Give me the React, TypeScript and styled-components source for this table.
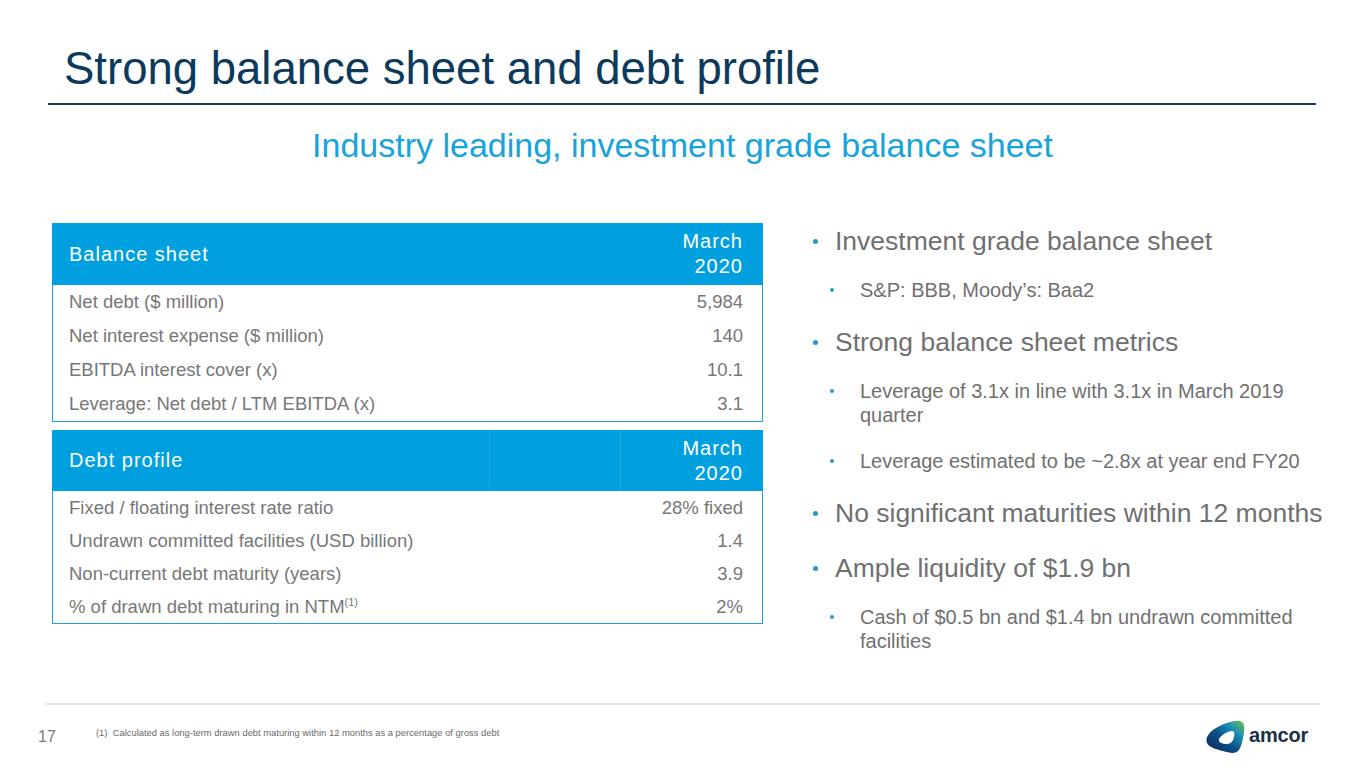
import styled, { createGlobalStyle } from 'styled-components';

const GlobalStyle = createGlobalStyle`
  html, body {
    margin: 0;
    padding: 0;
    background: #ffffff;
  }
  body {
    font-family: "Liberation Sans", Arial, sans-serif;
  }
`;

const Page = styled.div`
  width: 1365px;
  height: 768px;
  display: flex;
  flex-direction: column;
  overflow: hidden;
  background: #ffffff;
`;

const TitleBar = styled.header`
  margin-left: 48px;
  width: 1268px;
  padding: 43px 0 8px 16px;
  box-sizing: border-box;
  border-bottom: 2px solid #1d3d5a;
`;

const Title = styled.h1`
  margin: 0;
  font-size: 45.5px;
  line-height: 52px;
  font-weight: 400;
  color: #0c3a5d;
`;

const Subtitle = styled.h2`
  margin: 20px 0 0;
  text-align: center;
  font-size: 34px;
  line-height: 40px;
  font-weight: 400;
  color: #17a3dc;
`;

const Main = styled.main`
  display: flex;
  margin-top: 58px;
  padding-left: 52px;
`;

const TablesColumn = styled.div`
  display: flex;
  flex-direction: column;
  gap: 8px;
  width: 711px;
  flex: none;
`;

const Table = styled.div`
  border: 1px solid #1ea2dd;
  border-top: none;
`;

const HeaderRow = styled.div<{ $split?: boolean; $height: number }>`
  display: grid;
  grid-template-columns: ${p => (p.$split ? '437px 131px 1fr' : '1fr auto')};
  height: ${p => p.$height}px;
  margin: 0 -1px;
  background: #009fe0;
  color: #ffffff;
  font-size: 20px;
  letter-spacing: 1px;
`;

const HeaderCell = styled.div<{ $right?: boolean; $divider?: boolean }>`
  display: flex;
  align-items: center;
  justify-content: ${p => (p.$right ? 'flex-end' : 'flex-start')};
  text-align: ${p => (p.$right ? 'right' : 'left')};
  padding: ${p => (p.$right ? '0 20px 0 0' : '0 0 0 17px')};
  line-height: 25px;
  border-left: ${p => (p.$divider ? '1px solid rgba(255, 255, 255, 0.13)' : 'none')};
`;

const Row = styled.div<{ $height: number }>`
  display: flex;
  justify-content: space-between;
  align-items: center;
  height: ${p => p.$height}px;
  padding: 0 19px 0 16px;
  font-size: 18.5px;
  color: #777777;
`;

const Sup = styled.sup`
  font-size: 11px;
  line-height: 0;
  vertical-align: 7px;
`;

const BulletList = styled.ul`
  list-style: none;
  margin: 3px 0 0 45px;
  padding: 0;
  color: #707070;
`;

const Item = styled.li<{ $level: 1 | 2 }>`
  display: flex;
  margin-top: ${p => (p.$level === 1 ? 25 : 22)}px;
  font-size: ${p => (p.$level === 1 ? 26.5 : 20)}px;
  line-height: ${p => (p.$level === 1 ? 30 : 24)}px;

  &:first-child {
    margin-top: 0;
  }
`;

const Marker = styled.span<{ $level: 1 | 2 }>`
  flex: none;
  display: flex;
  align-items: center;
  box-sizing: border-box;
  width: ${p => (p.$level === 1 ? 27 : 52)}px;
  height: ${p => (p.$level === 1 ? 30 : 24)}px;
  padding-left: ${p => (p.$level === 1 ? 5 : 22)}px;

  &::before {
    content: '';
    width: ${p => (p.$level === 1 ? 5 : 4)}px;
    height: ${p => (p.$level === 1 ? 5 : 4)}px;
    border-radius: 50%;
    background: #2399cc;
  }
`;

const ItemText = styled.span<{ $width?: number }>`
  max-width: ${p => (p.$width ? `${p.$width}px` : 'none')};
`;

const Footer = styled.footer`
  margin-top: auto;
  height: 65px;
  display: flex;
  flex-direction: column;
`;

const FooterRule = styled.div`
  margin-left: 46px;
  width: 1273px;
  height: 2px;
  background: #e1e1e1;
`;

const FooterRow = styled.div`
  flex: 1;
  display: flex;
  align-items: center;
  padding: 0 57px 0 38px;
`;

const PageNumber = styled.span`
  width: 58px;
  flex: none;
  font-size: 16px;
  color: #7a7a7a;
`;

const Footnote = styled.span`
  flex: 1;
  margin-bottom: 8px;
  font-size: 9.4px;
  color: #6a6a6a;
`;

const Logo = styled.div`
  display: flex;
  align-items: center;
  gap: 4px;
`;

const LogoText = styled.span`
  font-size: 20px;
  font-weight: 700;
  color: #1c3047;
  letter-spacing: -0.2px;
  margin-top: -2px;
`;

const balanceRows = [
  ['Net debt ($ million)', '5,984'],
  ['Net interest expense ($ million)', '140'],
  ['EBITDA interest cover (x)', '10.1'],
  ['Leverage: Net debt / LTM EBITDA (x)', '3.1'],
];

const debtRows: [React.ReactNode, string][] = [
  ['Fixed / floating interest rate ratio', '28% fixed'],
  ['Undrawn committed facilities (USD billion)', '1.4'],
  ['Non-current debt maturity (years)', '3.9'],
  [<>% of drawn debt maturing in NTM<Sup>(1)</Sup></>, '2%'],
];

const bullets: { level: 1 | 2; text: string }[] = [
  { level: 1, text: 'Investment grade balance sheet' },
  { level: 2, text: 'S&P: BBB, Moody’s: Baa2' },
  { level: 1, text: 'Strong balance sheet metrics' },
  { level: 2, text: 'Leverage of 3.1x in line with 3.1x in March 2019 quarter' },
  { level: 2, text: 'Leverage estimated to be ~2.8x at year end FY20' },
  { level: 1, text: 'No significant maturities within 12 months' },
  { level: 1, text: 'Ample liquidity of $1.9 bn' },
  { level: 2, text: 'Cash of $0.5 bn and $1.4 bn undrawn committed facilities' },
];

function AmcorMark() {
  return (
    <svg width="40" height="34" viewBox="0 0 40 34">
      <defs>
        <linearGradient id="amcorGrad" x1="0" y1="1" x2="1" y2="0">
          <stop offset="0" stopColor="#0a2550" />
          <stop offset="0.45" stopColor="#0d4f8a" />
          <stop offset="0.72" stopColor="#1b8fb8" />
          <stop offset="1" stopColor="#7cc242" />
        </linearGradient>
      </defs>
      <path
        d="M2 23 C0 18 4 12 11 8 C19 3 30 0 35 1 C39 2 40 6 39 12 C38 20 36 28 33 31 C30 34 24 33 18 31 C10 29 4 27 2 23 Z"
        fill="url(#amcorGrad)"
      />
      <path
        d="M14 19 C16 15 23 11 27 11 C29 11 30 13 29 17 C28 21 26 24 22 24 C17 24 13 22 14 19 Z"
        fill="#ffffff"
      />
    </svg>
  );
}

export default function App() {
  return (
    <Page>
      <GlobalStyle />
      <TitleBar>
        <Title>Strong balance sheet and debt profile</Title>
      </TitleBar>
      <Subtitle>Industry leading, investment grade balance sheet</Subtitle>

      <Main>
        <TablesColumn>
          <Table>
            <HeaderRow $height={62}>
              <HeaderCell>Balance sheet</HeaderCell>
              <HeaderCell $right>March<br />2020</HeaderCell>
            </HeaderRow>
            {balanceRows.map(([label, value]) => (
              <Row key={label} $height={34}>
                <span>{label}</span>
                <span>{value}</span>
              </Row>
            ))}
          </Table>

          <Table>
            <HeaderRow $height={61} $split>
              <HeaderCell>Debt profile</HeaderCell>
              <HeaderCell $divider />
              <HeaderCell $right $divider>March<br />2020</HeaderCell>
            </HeaderRow>
            {debtRows.map(([label, value]) => (
              <Row key={value} $height={33}>
                <span>{label}</span>
                <span>{value}</span>
              </Row>
            ))}
          </Table>
        </TablesColumn>

        <BulletList>
          {bullets.map(b => (
            <Item key={b.text} $level={b.level}>
              <Marker $level={b.level} />
              <ItemText $width={b.level === 2 ? 440 : undefined}>{b.text}</ItemText>
            </Item>
          ))}
        </BulletList>
      </Main>

      <Footer>
        <FooterRule />
        <FooterRow>
          <PageNumber>17</PageNumber>
          <Footnote>(1)&nbsp; Calculated as long-term drawn debt maturing within 12 months as a percentage of gross debt</Footnote>
          <Logo>
            <AmcorMark />
            <LogoText>amcor</LogoText>
          </Logo>
        </FooterRow>
      </Footer>
    </Page>
  );
}
